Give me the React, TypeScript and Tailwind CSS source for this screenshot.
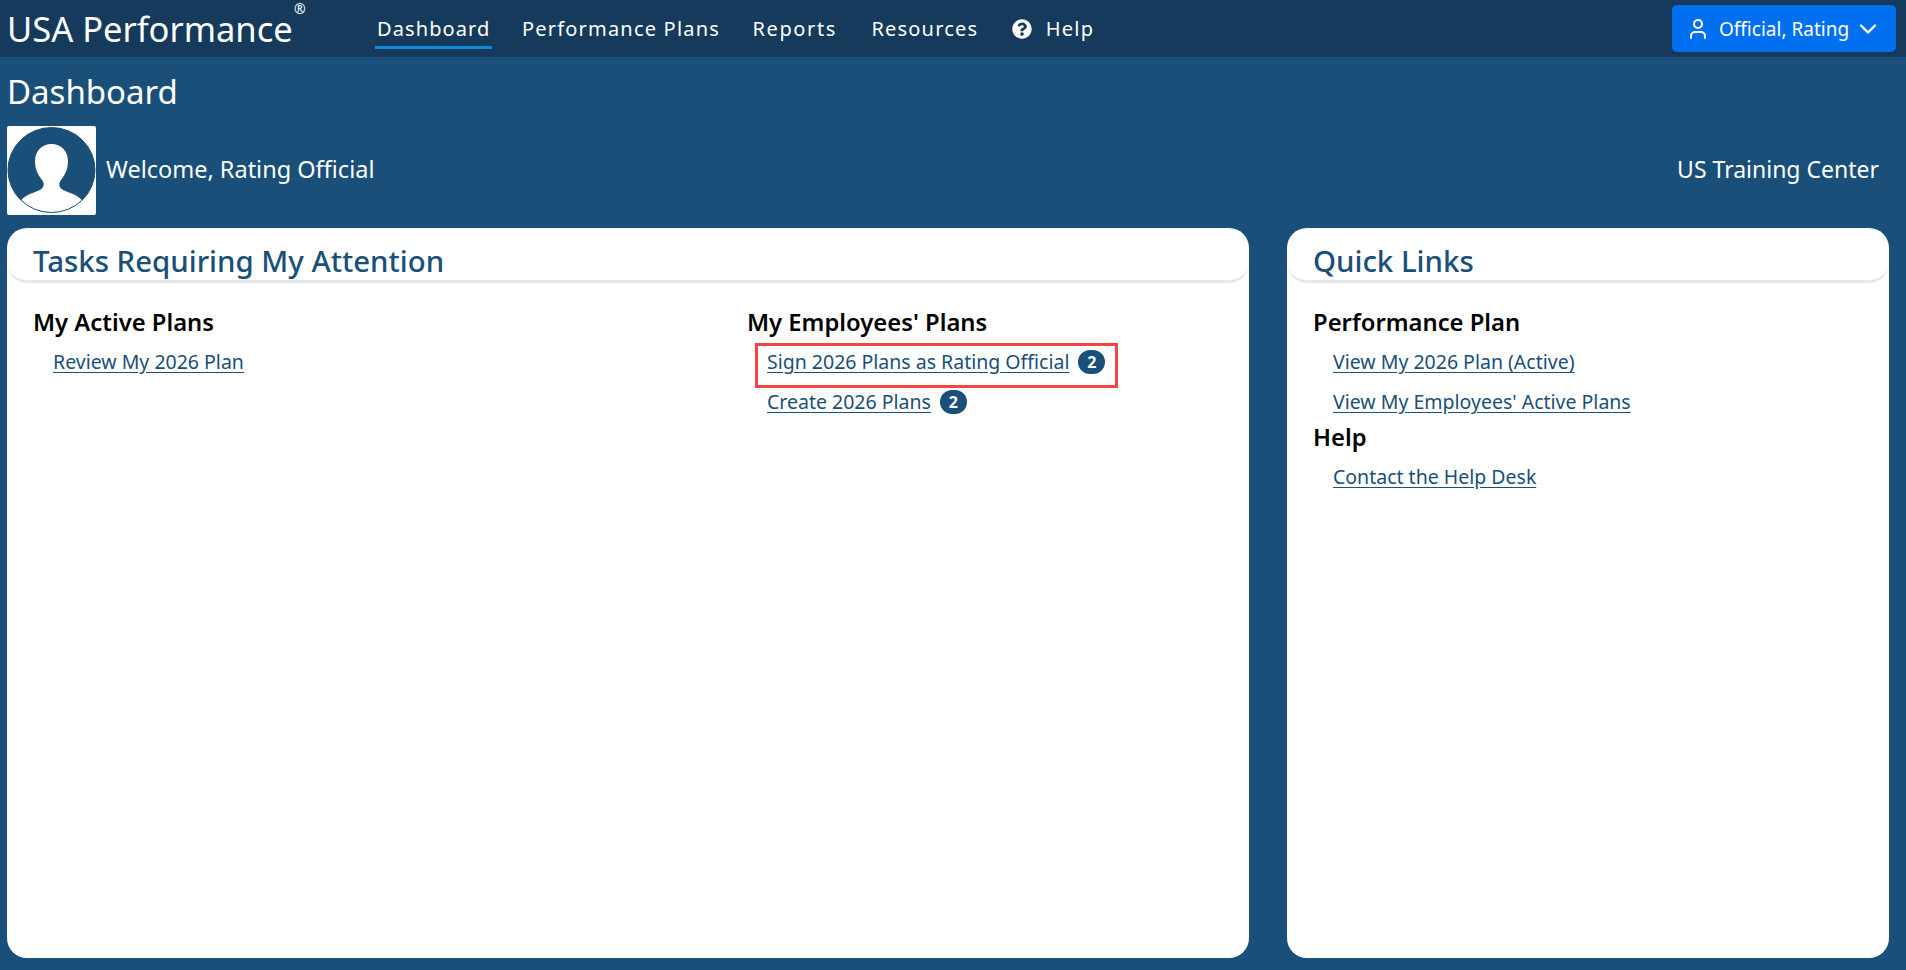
import React from 'react';
import { User, ChevronDown } from 'lucide-react';
import { FaQuestionCircle } from 'react-icons/fa';

const navItems = [
  { label: 'Dashboard', active: true, extra: 'tracking-[1.1px]' },
  { label: 'Performance Plans', extra: 'tracking-[1.2px]' },
  { label: 'Reports', extra: 'tracking-[1.6px] ml-[1px]' },
  { label: 'Resources', extra: 'tracking-[1.2px] ml-[3px]' },
];

// avatar placeholder from the dashboard header
const Avatar = () => (
  <div className="w-[89px] h-[89px] bg-white rounded-[2px] shrink-0 flex items-center justify-center">
    <svg viewBox="0 0 89 89" className="w-[89px] h-[89px]">
      <ellipse cx="44.5" cy="44" rx="43.500" ry="42.500" fill="#194f78" />
      <path
        d="M44.500 18C35 18 28 25 28 35C28 43 31 49 35 54C38 58 37 62 33 64C26 67 18 69 14 74.500A43.500 42.500 0 0 0 75 74.500C71 69 63 67 56 64C52 62 51 58 54 54C58 49 61 43 61 35C61 25 54 18 44.500 18Z"
        fill="white"
      />
      <ellipse cx="44.5" cy="44" rx="43.500" ry="42.500" fill="none" stroke="#194f78" strokeWidth="1" />
    </svg>
  </div>
);

const PanelLink = ({ children, badge }: { children: React.ReactNode; badge?: number }) => (
  <div className="flex items-center h-[40px] pl-5">
    <a href="#" className="text-[19.5px] leading-[26px] text-[#194f78] underline underline-offset-[3px]">
      {children}
    </a>
    {badge !== undefined && (
      <span className="ml-[9px] w-[27px] h-[24px] rounded-full bg-[#194f78] text-white text-[16px] font-bold leading-none flex items-center justify-center">
        {badge}
      </span>
    )}
  </div>
);

const SectionTitle = ({ children }: { children: React.ReactNode }) => (
  <h3 className="text-[23.8px] leading-[30px] mb-[5px] font-semibold text-black">{children}</h3>
);

const Panel = ({ title, className, children }: { title: string; className: string; children: React.ReactNode }) => (
  <section className={`bg-white rounded-[20px] ${className}`}>
    <div className="h-[55px] px-[26px] border-b-[3px] border-[#e5e9ec] rounded-b-[20px] flex items-end">
      <h2 className="text-[29.4px] leading-[38px] font-medium text-[#194f78]">{title}</h2>
    </div>
    <div className="px-[26px] pt-[24px]">{children}</div>
  </section>
);

export default function App() {
  return (
    <div className="h-[970px] flex flex-col bg-[#194f78] text-white font-['Noto_Sans',sans-serif] overflow-hidden">
      <header className="h-[57px] shrink-0 bg-[#153a5c] flex items-center pl-[7px] pr-[10px]">
        <div className="relative w-[286px] text-[34.5px] leading-[57px] whitespace-nowrap">
          USA Performance
          <span className="absolute left-[287px] top-[2px] text-[14px] leading-[14px]">®</span>
        </div>
        <nav className="ml-[84px] flex items-center gap-[31.5px] text-[20px] whitespace-nowrap">
          {navItems.map(item => (
            <a
              key={item.label}
              href="#"
              className={`h-[57px] flex items-center ${item.extra} ${item.active ? 'relative' : ''}`}
            >
              {item.label}
              {item.active && <span className="absolute -left-[2px] -right-[2px] bottom-[8px] h-[3px] bg-[#0d8ad8]" />}
            </a>
          ))}
          <a href="#" className="ml-[2px] flex items-center gap-[14px] tracking-[1.2px]">
            <FaQuestionCircle className="w-[20px] h-[20px]" />
            Help
          </a>
        </nav>
        <button className="ml-auto w-[224px] h-[47px] rounded-[5px] bg-[#0070f0] flex items-center pl-[14px] text-[19px]">
          <User className="w-[24px] h-[24px]" strokeWidth={2} />
          <span className="ml-[9px] pt-[2px]">Official, Rating</span>
          <ChevronDown className="ml-auto mr-[14px] w-[28px] h-[28px]" strokeWidth={2} />
        </button>
      </header>

      <main className="flex-1 px-[7px] pb-[12px] flex flex-col min-h-0">
        <h1 className="text-[33px] leading-[44px] mt-[13px]">Dashboard</h1>
        <div className="mt-[12px] flex items-center h-[89px] pr-[20px]">
          <Avatar />
          <span className="ml-[10px] text-[23.5px] leading-[30px] mb-[4px]">Welcome, Rating Official</span>
          <span className="ml-auto text-[23px] leading-[30px] mb-[4px]">US Training Center</span>
        </div>
        <div className="mt-[13px] flex-1 flex gap-[38px] min-h-0 pr-[10px]">
          <Panel title="Tasks Requiring My Attention" className="w-[1242px]">
            <div className="flex">
              <div className="w-[714px]">
                <SectionTitle>My Active Plans</SectionTitle>
                <PanelLink>Review My 2026 Plan</PanelLink>
              </div>
              <div>
                <SectionTitle>My Employees' Plans</SectionTitle>
                <div className="relative">
                  <PanelLink badge={2}>Sign 2026 Plans as Rating Official</PanelLink>
                  <div className="absolute left-[8px] top-px w-[363px] h-[45px] border-[3px] border-[#f44444]" />
                </div>
                <PanelLink badge={2}>Create 2026 Plans</PanelLink>
              </div>
            </div>
          </Panel>
          <Panel title="Quick Links" className="flex-1">
            <SectionTitle>Performance Plan</SectionTitle>
            <PanelLink>View My 2026 Plan (Active)</PanelLink>
            <PanelLink>View My Employees' Active Plans</PanelLink>
            <SectionTitle>Help</SectionTitle>
            <PanelLink>Contact the Help Desk</PanelLink>
          </Panel>
        </div>
      </main>
    </div>
  );
}
